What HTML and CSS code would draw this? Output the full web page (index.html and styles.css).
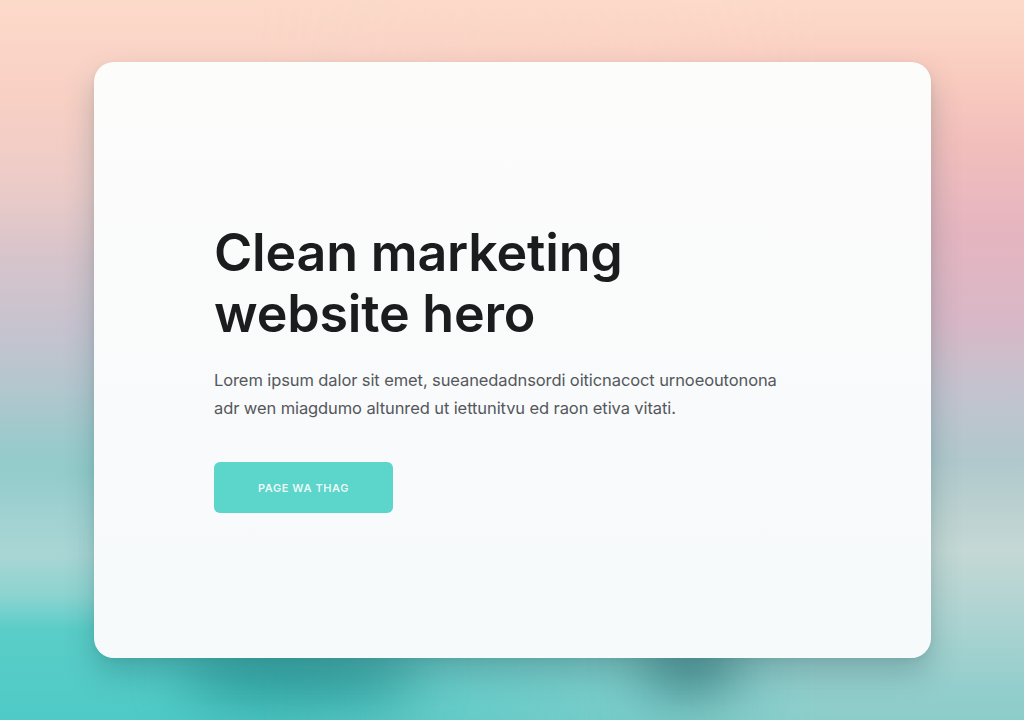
FILE: index.html
```html
<!DOCTYPE html>
<html lang="en">
<head>
<meta charset="utf-8">
<title>Clean marketing website hero</title>
<link rel="stylesheet" href="styles.css">
</head>
<body>
<div class="bg-right"></div>
<div class="blob blob-a"></div>
<div class="blob blob-b"></div>
<main class="card">
  <section class="hero">
    <h1 class="title">Clean marketing<br>website hero</h1>
    <p class="lead">Lorem ipsum dalor sit emet, sueanedadnsordi oiticnacoct urnoeoutonona<br>adr wen miagdumo altunred ut iettunitvu ed raon etiva vitati.</p>
    <a class="cta" href="#">PAGE WA THAG</a>
  </section>
</main>
</body>
</html>
```
FILE: styles.css
```css
html, body {
  margin: 0;
  height: 100%;
}
body {
  position: relative;
  overflow: hidden;
  box-sizing: border-box;
  padding: 62px 93px 0 94px;
  font-family: "Inter", "Liberation Sans", sans-serif;
  background: linear-gradient(180deg,
    #fcdaca 0px,
    #f8d0c4 100px,
    #ebcbc8 190px,
    #d6c4cb 260px,
    #c6c3cf 330px,
    #b6c6ce 380px,
    #a0c9cc 430px,
    #92cccb 470px,
    #a2d2d2 520px,
    #a8d6d5 555px,
    #8cd4d0 595px,
    #5acdc8 630px,
    #4fcac6 720px);
}
.bg-right {
  position: absolute;
  inset: 0;
  background: linear-gradient(180deg,
    #fcdaca 0px,
    #f9cbbf 80px,
    #f3bfbc 140px,
    #e5b5c0 230px,
    #d9b7c6 320px,
    #c2c3cf 395px,
    #b0c8cc 460px,
    #c4d8d4 550px,
    #b0d4d2 610px,
    #92cecc 690px,
    #8ccdca 720px);
  -webkit-mask-image: linear-gradient(90deg, transparent 25%, #000 80%);
  mask-image: linear-gradient(90deg, transparent 25%, #000 80%);
}
.blob {
  position: absolute;
  border-radius: 50%;
  filter: blur(26px);
}
.blob-a {
  left: 180px;
  top: 648px;
  width: 240px;
  height: 60px;
  background: rgba(25, 135, 135, 0.6);
}
.blob-b {
  left: 640px;
  top: 640px;
  width: 100px;
  height: 56px;
  background: rgba(25, 95, 100, 0.6);
}
.card {
  position: relative;
  box-sizing: border-box;
  width: 837px;
  height: 596px;
  border-radius: 20px;
  background: linear-gradient(180deg, #fcfcfb 0%, #f9fafb 60%, #f6fafb 100%);
  box-shadow: 0 16px 30px rgba(20, 70, 80, 0.25), 0 2px 6px rgba(0, 0, 0, 0.06);
  padding: 160px 120px 0 120px;
}
.hero {
  display: flex;
  flex-direction: column;
  align-items: flex-start;
}
.title {
  margin: 0;
  font-size: 52px;
  line-height: 61px;
  font-weight: 600;
  letter-spacing: -0.2px;
  color: #1b1c1e;
}
.lead {
  margin: 22px 0 0;
  font-size: 16.5px;
  line-height: 28px;
  color: #54585c;
  letter-spacing: -0.1px;
}
.cta {
  margin-top: 40px;
  display: flex;
  align-items: center;
  justify-content: center;
  width: 179px;
  height: 51px;
  border-radius: 6px;
  background: #5cd5ca;
  color: rgba(255, 255, 255, 0.88);
  font-size: 11px;
  font-weight: 600;
  letter-spacing: 0.6px;
  text-decoration: none;
}
```
